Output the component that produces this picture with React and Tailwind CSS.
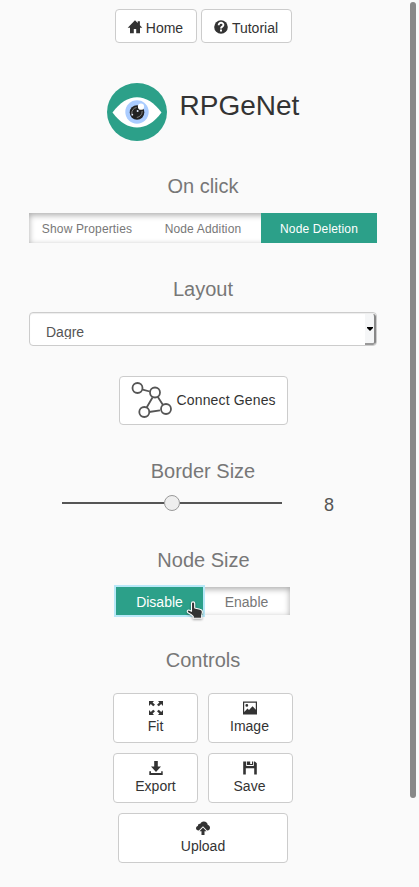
import React from 'react';

const icons = {
  home: 'M7 0.2 L-0.3 7.7 H2 V13.3 H5.8 V9 H8.2 V13.3 H12 V7.7 H14.3 L11.9 5.2 V1.2 H9.7 V3 Z',
  fit: 'M0 0H5L3.6 1.4L6 3.7L4.2 5.2L1.8 3L0 5ZM14 0V5L12.2 3L9.8 5.2L8 3.7L10.4 1.4L9 0ZM0 14V9L1.8 11L4.2 8.8L6 10.3L3.6 12.6L5 14ZM14 14H9L10.4 12.6L8 10.3L9.8 8.8L12.2 11L14 9Z',
  image: 'M0 0.5H14V13.5H0ZM1.2 1.7V11L4.5 7.5L6 9L9.5 5.2L10.8 6.5L12.8 8.8V1.7ZM3.8 3A1.4 1.4 0 1 1 3.8 5.8A1.4 1.4 0 1 1 3.8 3Z',
  export: 'M5.2 0H8.8V5.5H12L7 11L2 5.5H5.2ZM0.3 10.3H2V12H12.2V10.3H13.7V14H0.3Z',
  save: 'M0.2 0.5H3.2V5H10.8V0.5H11.8L13.8 2.2V13.5H11.2V7.3H2.8V13.5H0.2ZM4 0.5H7.2V3H9V0.5H10V4H4Z',
  upload: 'M2.6 9.5C.8 9.4 0 8.4 0 7.2C0 6.1.8 5.2 1.9 5C1.8 3.7 3 2.7 4.1 2.9C4.8 1.3 6.1.4 7.9.5C10 .6 11.5 2 11.8 4C13.2 4.2 14 5.3 14 6.8C14 8.4 13 9.5 11.5 9.5H11.1L7 5.2L2.8 9.5ZM7 6.6L10.5 10.3H8.5V14H5.5V10.3H3.5Z',
};

function Icon({ name }) {
  return (
    <svg className="h-3.5 w-3.5 shrink-0 overflow-visible" viewBox="0 0 14 14" fill="#333" fillRule="evenodd">
      <path d={icons[name]} />
    </svg>
  );
}

function Heading({ children, className }) {
  return <h2 className={`text-center text-[20px] leading-[22px] text-[#777] ${className}`}>{children}</h2>;
}

const button = 'rounded border border-[#ccc] bg-white text-[14px] leading-5 text-[#333]';

function ControlButton({ icon, children, className }) {
  return (
    <button className={`flex h-[50px] flex-col items-center pt-[7px] ${button} ${className}`}>
      <Icon name={icon} />
      <span className="mt-px leading-5">{children}</span>
    </button>
  );
}

function EyeLogo() {
  return (
    <svg className="h-[60px] w-[60px]" viewBox="0 0 60 60">
      <ellipse cx="30" cy="29" rx="30" ry="29" fill="#2ca089" />
      <path d="M5.5 29.5C20 9 40 9 54.5 29.5C40 49.5 20 49.5 5.5 29.5Z" fill="#fff" />
      <circle cx="30" cy="29" r="11.7" fill="#aaccff" />
      <circle cx="30" cy="29.5" r="7.3" fill="#222" />
      <path d="M24.8 31C24.5 27.5 26.5 25 29.5 24.5M35.2 28C35.3 31.5 33 34 29.8 34.5" fill="none" stroke="#aaa" strokeWidth=".7" />
      <circle cx="34" cy="23.7" r="3.1" fill="#fff" />
      <circle cx="30.6" cy="28" r="1" fill="#e5eeff" />
      <circle cx="25.3" cy="31.7" r=".9" fill="#e5eeff" />
    </svg>
  );
}

function GenesIcon() {
  return (
    <svg className="h-[38px] w-[42px] shrink-0" viewBox="0 0 42 38" fill="none" stroke="#555" strokeWidth="1.8">
      <path d="M11.7 7.6L18.7 9.5M21.5 15.5L15.5 25.7M26.7 14.8L32 23M18 30L29 28.3" />
      <circle cx="6.5" cy="6" r="5" />
      <circle cx="24" cy="10.5" r="5" />
      <circle cx="13.3" cy="30" r="5" />
      <circle cx="35" cy="27" r="5" />
    </svg>
  );
}

function HandCursor() {
  return (
    <svg className="absolute left-[70px] top-[14px] z-10 h-[19px] w-[18px] overflow-visible" viewBox="0 0 18 19">
      <path d="M5.5 2.4C5.5.3 8.7.3 8.7 2.4V7L14 8.2C16 8.6 16.6 9.8 16.3 11.6L15.7 14.5V17.2H7.2V15.4L5 13.4L2 11.8C.4 10.2 1.6 8.6 3.5 9.2L5.5 10.3Z" fill="#333" stroke="#fff" strokeWidth="1.1" strokeLinejoin="round" className="drop-shadow-[0_1px_1px_rgba(0,0,0,0.35)]" />
    </svg>
  );
}

export default function App() {
  return (
    <div className="flex h-[887px] w-[419px] justify-between overflow-hidden bg-[#fafafa] font-['Liberation_Sans',Arial,sans-serif]">
      <main className="flex w-[406px] flex-col items-center pt-[9px]">
        <nav className="flex gap-1">
          <button className={`flex h-[34px] w-[82px] items-center justify-center gap-1 pt-[2px] ${button}`}>
            <Icon name="home" />
            <span className="pt-px">Home</span>
          </button>
          <button className={`flex h-[34px] w-[91px] items-center justify-center gap-1 pt-[2px] ${button}`}>
            <svg className="h-3.5 w-3.5" viewBox="0 0 14 14">
              <circle cx="7" cy="7" r="6.8" fill="#333" />
              <path d="M4.7 5.2C4.6 2 9.5 2.1 9.4 5C9.4 6.8 7 6.5 7 8.5" fill="none" stroke="#fff" strokeWidth="1.9" />
              <path d="M6 9.6H8V11.4H6Z" fill="#fff" />
            </svg>
            <span className="pt-px">Tutorial</span>
          </button>
        </nav>

        <header className="mt-[40px] flex h-[60px] w-[193px] gap-[13px] whitespace-nowrap">
          <EyeLogo />
          <h1 className="pt-[7px] text-[28px] leading-8 text-[#333]">RPGeNet</h1>
        </header>

        <Heading className="mt-[32px]">On click</Heading>
        <div className="mt-4 flex h-[30px] w-[348px] bg-white text-[12px] leading-[32px] tracking-[0.15px] text-[#777] shadow-[inset_0_2px_6px_rgba(0,0,0,0.35)]">
          <div className="w-[116px] text-center">Show Properties</div>
          <div className="w-[116px] text-center">Node Addition</div>
          <div className="w-[116px] bg-[#2ca089] text-center text-white">Node Deletion</div>
        </div>

        <Heading className="mt-[35px]">Layout</Heading>
        <div className="mt-[12px] flex h-[34px] w-[348px] justify-between overflow-hidden rounded border border-[#ccc] bg-white pl-4 text-[14px] text-[#555] shadow-[inset_0_1px_1px_rgba(0,0,0,0.075)]">
          <span className="h-[26px] overflow-hidden pt-[9px] leading-5">Dagre</span>
          <span className="mt-px flex h-[31px] w-[11px] items-center justify-center rounded-r-[3px] border-b-2 border-r-2 border-[#888] border-b-[#999] bg-[#f5f6f7]">
            <svg className="h-1 w-1.5 shrink-0" viewBox="0 0 6 4"><path d="M0 0H6V1L3 4L0 1Z" fill="#000" /></svg>
          </span>
        </div>

        <button className={`mt-[30px] flex h-[49px] w-[169px] items-center gap-1 pl-[11px] ${button}`}>
          <GenesIcon />
          <span className="whitespace-nowrap pb-[2px] tracking-[0.15px]">Connect Genes</span>
        </button>

        <Heading className="mt-[35px]">Border Size</Heading>
        <div className="mt-[10px] flex h-[22px] w-[282px] items-center justify-between">
          <div className="flex h-4 w-[220px] items-center">
            <div className="h-0.5 w-[102px] bg-[#555]" />
            <div className="h-4 w-4 rounded-full border border-[#999] bg-[#eee]" />
            <div className="h-0.5 flex-1 bg-[#555]" />
          </div>
          <span className="mr-[10px] pt-[3px] text-[18px] leading-5 text-[#555]">8</span>
        </div>

        <Heading className="mt-[35px] pl-px">Node Size</Heading>
        <div className="mt-[16px] flex h-[28px] w-[174px] bg-white text-[14px] leading-[30px] text-[#777] shadow-[inset_0_2px_6px_rgba(0,0,0,0.35)]">
          <div className="relative h-7 w-[87px] bg-[#2ca089] text-center text-white shadow-[0_0_0_2px_#b8e8f8]">
            Disable
            <HandCursor />
          </div>
          <div className="w-[87px] text-center">Enable</div>
        </div>

        <Heading className="mt-[34px]">Controls</Heading>
        <div className="mt-[22px] grid grid-cols-2 gap-[10px]">
          <ControlButton icon="fit" className="w-[85px]">Fit</ControlButton>
          <ControlButton icon="image" className="w-[85px] pr-[2px]">Image</ControlButton>
          <ControlButton icon="export" className="w-[85px]">Export</ControlButton>
          <ControlButton icon="save" className="w-[85px] pr-[2px]">Save</ControlButton>
          <ControlButton icon="upload" className="col-span-2 w-[170px] justify-self-center">Upload</ControlButton>
        </div>
      </main>
      <div className="mr-[3px] mt-0.5 h-[796px] w-1.5 rounded-full bg-[#888]" />
    </div>
  );
}
